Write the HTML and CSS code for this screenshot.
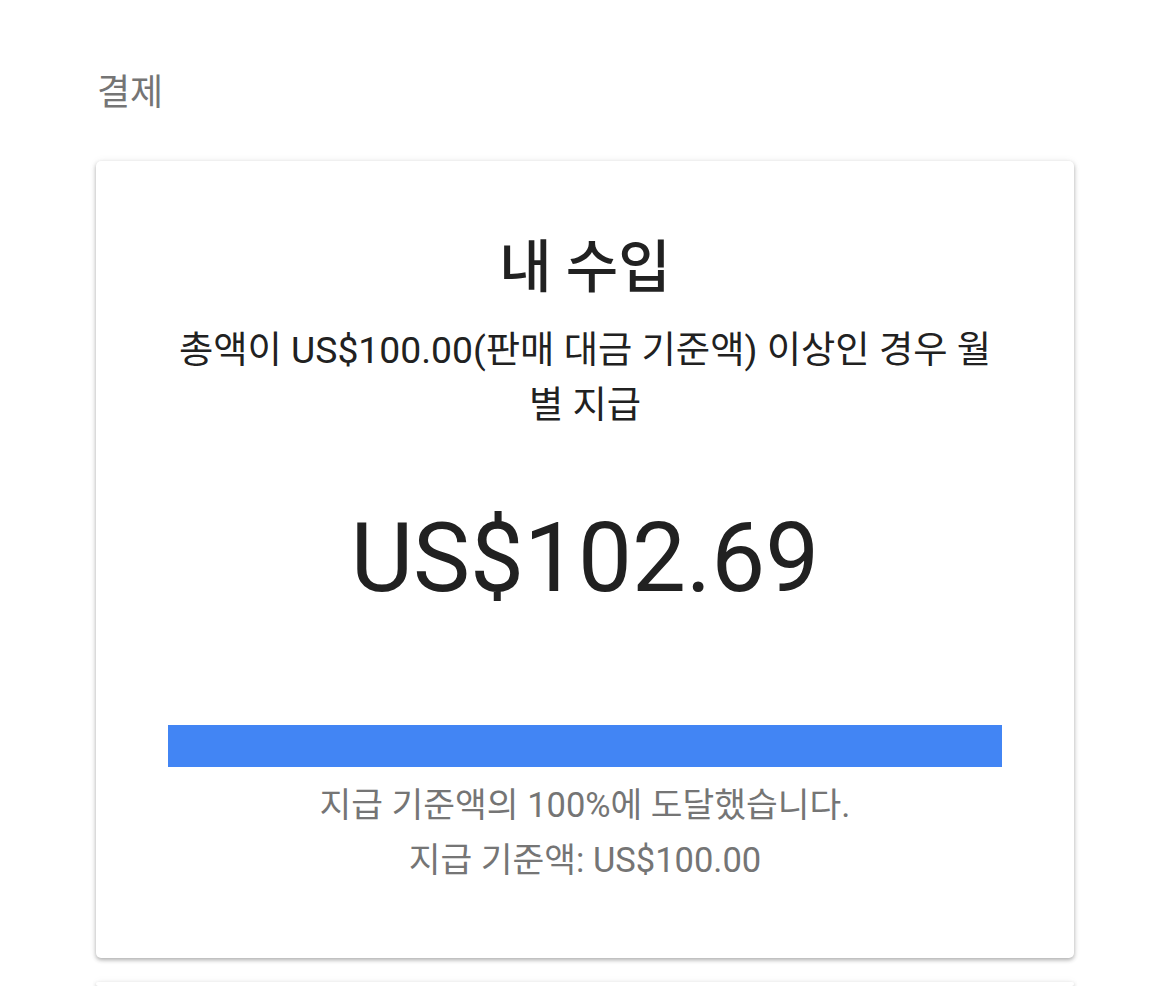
FILE: index.html
```html
<!DOCTYPE html>
<html lang="ko">
<head>
<meta charset="utf-8">
<link rel="stylesheet" href="styles.css">
</head>
<body>
<main class="page">
  <h2 class="section-title">결제</h2>
  <section class="card">
    <h1 class="card-title">내 수입</h1>
    <p class="card-sub">총액이 US$100.00(판매 대금 기준액) 이상인 경우 월별 지급</p>
    <div class="amount">US$102.69</div>
    <div class="progress"><div class="progress-fill" style="width:100%"></div></div>
    <p class="note">지급 기준액의 100%에 도달했습니다.<br>지급 기준액: US$100.00</p>
  </section>
  <section class="card card-next"></section>
</main>
</body>
</html>
```

FILE: styles.css
```css
html, body {
  margin: 0;
  padding: 0;
  background: #ffffff;
}
body {
  font-family: Roboto, "Noto Sans CJK KR", sans-serif;
  color: #212121;
}
.page {
  padding: 71px 95px 0 96px;
  display: flex;
  flex-direction: column;
  gap: 24px;
}
.section-title {
  margin: 0 0 0 1px;
  font-size: 36px;
  font-weight: 400;
  line-height: 44px;
  height: 66px;
  color: #757575;
}
.card {
  background: #fff;
  border-radius: 5px;
  box-shadow: 0 2px 4px rgba(0,0,0,0.3), 0 0 8px rgba(0,0,0,0.06);
  padding: 72px 72px 70px;
  display: flex;
  flex-direction: column;
  align-items: center;
  text-align: center;
}
.card-title {
  margin: 0;
  font-size: 57px;
  font-weight: 500;
  line-height: 70px;
  color: #212121;
}
.card-sub {
  margin: 20px 0 0;
  font-size: 37.3px;
  line-height: 55px;
  color: #212121;
}
.amount {
  margin-top: 69px;
  font-size: 96px;
  line-height: 112px;
  color: #212121;
}
.progress {
  margin-top: 111px;
  align-self: stretch;
  height: 42px;
  background: #e0e0e0;
}
.progress-fill {
  height: 100%;
  background: #4285f4;
}
.note {
  margin: 11px 0 0;
  font-size: 34.5px;
  line-height: 55px;
  color: #757575;
}
.card-next {
  height: 4px;
  padding: 0;
}
```
